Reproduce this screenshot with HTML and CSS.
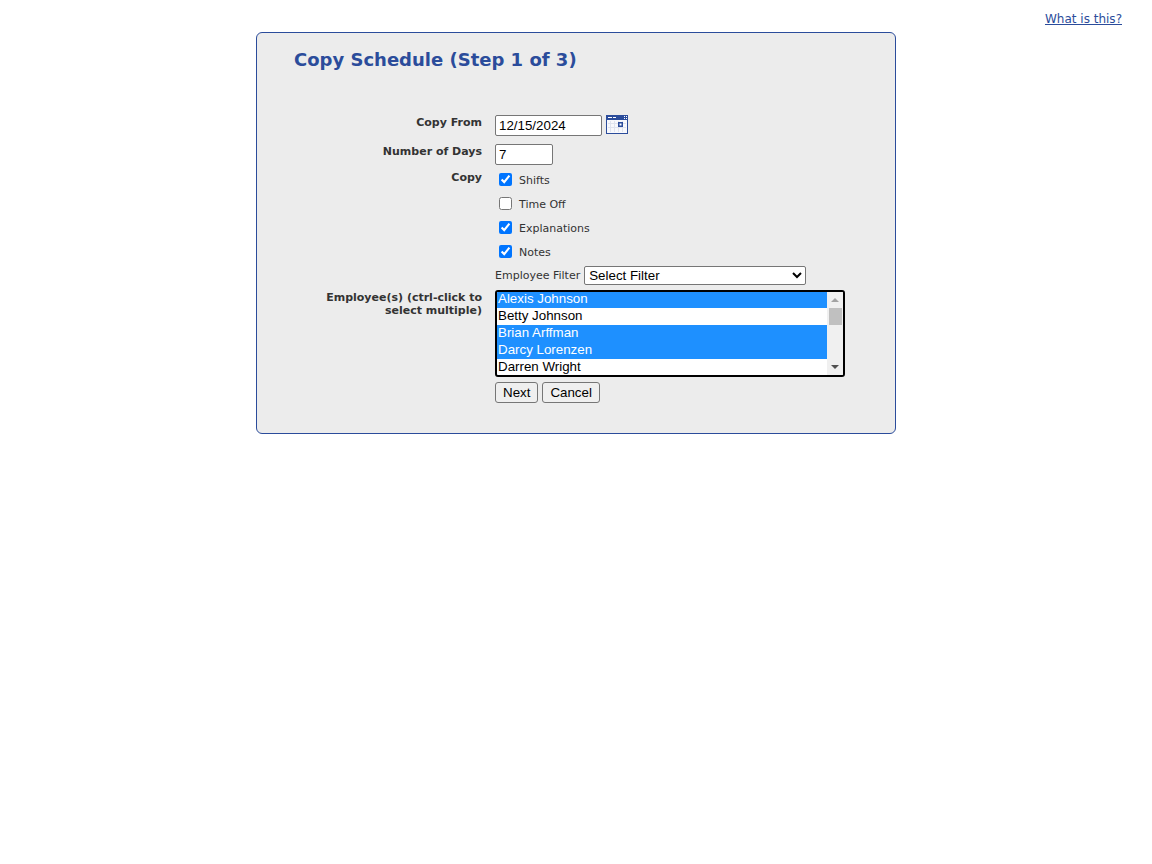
FILE: index.html
```html
<!DOCTYPE html>
<html lang="en">
<head>
  <meta charset="UTF-8">
  <title>Copy Schedule</title>
  <link rel="stylesheet" href="styles.css">
</head>
<body>

  <div class="top-links">
    <a href="#">What is this?</a>
  </div>

  <div class="panel">
    <h1>Copy Schedule (Step 1 of 3)</h1>

    <form class="copy-form">
      <div class="row row-from">
        <label class="field-label">Copy From</label>
        <div class="field">
          <input type="text" class="date-input" value="12/15/2024">
          <svg class="cal-icon" width="22" height="19" viewBox="0 0 22 19">
            <rect width="22" height="19" fill="#2b4c9b"/>
            <rect x="1" y="5" width="20" height="13" fill="#f7f8fc"/>
            <rect x="2" y="2" width="4" height="1" fill="#fff"/>
            <rect x="7" y="2" width="3" height="1" fill="#fff"/>
            <rect x="18" y="1" width="1" height="1" fill="#fff"/>
            <rect x="20" y="1" width="1" height="1" fill="#fff"/>
            <rect x="18" y="3" width="1" height="1" fill="#fff"/>
            <rect x="20" y="3" width="1" height="1" fill="#fff"/>
            <path d="M4.5 6v11M8.5 6v11M12.5 6v11M16.5 6v11M2 8.5h18M2 12.5h18" stroke="#dfe3ee" stroke-width="1" fill="none"/>
            <rect x="12" y="7" width="5" height="5" fill="#2b4c9b"/>
            <rect x="13.5" y="8.5" width="2" height="2" fill="#fff"/>
          </svg>
        </div>
      </div>

      <div class="row row-days">
        <label class="field-label">Number of Days</label>
        <div class="field">
          <input type="text" class="days-input" value="7">
        </div>
      </div>

      <div class="row row-copy">
        <label class="field-label">Copy</label>
        <div class="checks">
          <label class="check"><input type="checkbox" checked> Shifts</label>
          <label class="check"><input type="checkbox"> Time Off</label>
          <label class="check"><input type="checkbox" checked> Explanations</label>
          <label class="check"><input type="checkbox" checked> Notes</label>
        </div>
      </div>

      <div class="row row-filter">
        <div class="field-label"></div>
        <div class="field">
          <span class="filter-label">Employee Filter</span>
          <select class="filter-select">
            <option>Select Filter</option>
          </select>
        </div>
      </div>

      <div class="row row-employees">
        <label class="field-label employee-label">Employee(s) (ctrl-click to select multiple)</label>
        <div class="field">
          <div class="list-box">
            <select class="employee-list" multiple size="5">
              <option selected>Alexis Johnson</option>
              <option>Betty Johnson</option>
              <option selected>Brian Arffman</option>
              <option selected>Darcy Lorenzen</option>
              <option>Darren Wright</option>
              <option>Diane Mills</option>
              <option>Frank Ortiz</option>
              <option>Gloria Hayes</option>
              <option>Henry Park</option>
              <option>Janet Cole</option>
              <option>Kevin Boyd</option>
              <option>Laura Simms</option>
              <option>Marcus Reed</option>
              <option>Nina Foster</option>
              <option>Paul Tran</option>
              <option>Rita Gomez</option>
              <option>Sam Walsh</option>
              <option>Tina Burke</option>
              <option>Victor Lane</option>
              <option>Wendy Hart</option>
            </select>
            <div class="scrollbar">
              <span class="arrow arrow-up"></span>
              <span class="thumb"></span>
              <span class="arrow arrow-down"></span>
            </div>
          </div>
        </div>
      </div>

      <div class="row row-buttons">
        <div class="field-label"></div>
        <div class="field">
          <button type="button" class="btn">Next</button>
          <button type="button" class="btn">Cancel</button>
        </div>
      </div>
    </form>
  </div>

</body>
</html>
```

FILE: styles.css
```css
body {
  margin: 0;
  background: #fff;
  font-family: "DejaVu Sans", Verdana, sans-serif;
  font-size: 11px;
  color: #333;
}

.top-links {
  height: 32px;
  padding-right: 30px;
  text-align: right;
  box-sizing: border-box;
  padding-top: 12px;
  font-size: 12px;
  line-height: 15px;
}

.top-links a {
  color: #2b4c9b;
}

.panel {
  box-sizing: border-box;
  width: 640px;
  height: 402px;
  margin: 0 auto;
  padding: 15px 0 0 0;
  background: #ececec;
  border: 1px solid #2b4c9b;
  border-radius: 6px;
}

h1 {
  margin: 0 0 0 37px;
  height: 67px;
  font-size: 18px;
  line-height: 23px;
  font-weight: bold;
  color: #2b4c9b;
}

.row {
  display: grid;
  grid-template-columns: 225px 1fr;
  column-gap: 13px;
}

.field-label {
  font-weight: bold;
  text-align: right;
  line-height: 13px;
  padding-top: 1px;
}

.field {
  display: flex;
  align-items: flex-start;
}

input[type="text"] {
  box-sizing: border-box;
  height: 21px;
  padding: 1px 3px;
  border: 1px solid #767676;
  border-radius: 2px;
  background: #fff;
  font-family: "Liberation Sans", Arial, sans-serif;
  font-size: 13.33px;
  color: #000;
}

.row-from {
  height: 29px;
}

.row-days {
  height: 24px;
}

.date-input {
  width: 107px;
}

.days-input {
  width: 58px;
}

.cal-icon {
  margin-left: 4px;
}

.checks {
  display: flex;
  flex-direction: column;
}

.check {
  display: flex;
  align-items: center;
  height: 24px;
  gap: 7px;
  padding-left: 4px;
}

.check input {
  width: 13px;
  height: 13px;
  margin: -2px 0 0;
  accent-color: #0075ff;
}

.row-copy .field-label {
  padding-top: 3px;
}

.row-filter {
  height: 24px;
  margin-top: 2px;
}

.row-filter .field {
  align-items: center;
  gap: 4px;
  height: 19px;
}

.filter-select {
  box-sizing: border-box;
  width: 222px;
  height: 19px;
  padding: 0;
  border: 1px solid #767676;
  border-radius: 2px;
  background: #fff;
  font-family: "Liberation Sans", Arial, sans-serif;
  font-size: 13.33px;
  color: #000;
}

.row-employees {
  height: 92px;
}

.employee-label {
  justify-self: end;
  max-width: 170px;
}

.list-box {
  box-sizing: border-box;
  display: flex;
  width: 350px;
  height: 87px;
  border: 2px solid #000;
  border-radius: 3px;
  background: #fff;
  overflow: hidden;
}

.employee-list {
  flex: 1;
  min-width: 0;
  height: 84px;
  margin-top: -1px;
  padding: 0;
  border: none;
  background: #fff;
  font-family: "Liberation Sans", Arial, sans-serif;
  font-size: 13.33px;
  color: #000;
  outline: none;
  overflow: hidden;
}

.employee-list option {
  height: 17px;
  line-height: 15px;
  padding: 0 1px;
  min-height: 0;
  box-sizing: border-box;
}

.employee-list option:checked {
  background: #1e90ff linear-gradient(#1e90ff, #1e90ff);
  color: #fff;
}

.scrollbar {
  flex: none;
  display: flex;
  flex-direction: column;
  align-items: center;
  width: 16px;
  background: #f0f0f0;
}

.arrow {
  width: 0;
  height: 0;
  border-left: 4px solid transparent;
  border-right: 4px solid transparent;
}

.arrow-up {
  margin: 6px 0 6px;
  border-bottom: 4px solid #a3a3a3;
}

.thumb {
  width: 13px;
  height: 17px;
  background: #c0c0c0;
}

.arrow-down {
  margin-top: auto;
  margin-bottom: 6px;
  border-top: 4px solid #505050;
}

.row-buttons .field {
  gap: 4px;
}

.btn {
  box-sizing: border-box;
  height: 21px;
  padding: 0 7px;
  border: 1px solid #767676;
  border-radius: 3px;
  background: #efefef;
  font-family: "Liberation Sans", Arial, sans-serif;
  font-size: 13.33px;
  color: #000;
}
```
